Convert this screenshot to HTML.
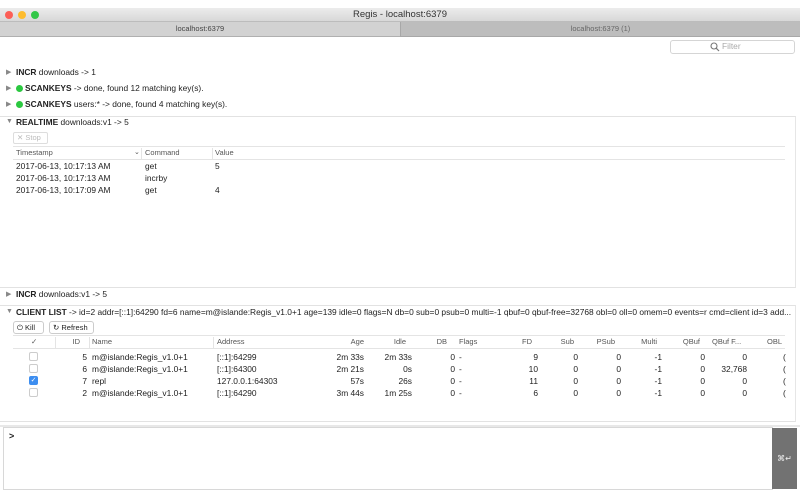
<!DOCTYPE html>
<html><head><meta charset="utf-8"><style>
*{margin:0;padding:0;box-sizing:border-box}
body{width:800px;height:500px;background:#fff;font-family:"Liberation Sans",sans-serif;font-size:8.4px;color:#222;position:relative;overflow:hidden}
.a{position:absolute;white-space:nowrap}
.b{font-weight:bold}
.tri{position:absolute;color:#888;font-size:7px}
.dot{position:absolute;width:7px;height:7px;border-radius:50%;background:#2bc840}
.hd{color:#555}
.r{text-align:right}
.cb{position:absolute;width:9px;height:9px;border:1px solid #ccc;border-radius:2px;background:#fff}
</style></head><body>
<div class="a" style="left:0;top:8px;width:800px;height:14px;background:linear-gradient(#ececec,#d8d8d8);border-bottom:1px solid #bcbcbc"></div>
<div class="a" style="left:5px;top:11px;width:8px;height:8px;border-radius:50%;background:#fc5f57"></div>
<div class="a" style="left:18px;top:11px;width:8px;height:8px;border-radius:50%;background:#fdbc2e"></div>
<div class="a" style="left:31px;top:11px;width:8px;height:8px;border-radius:50%;background:#33c748"></div>
<div class="a" style="left:0;top:9px;width:800px;text-align:center;font-size:9.5px;color:#333">Regis - localhost:6379</div>
<div class="a" style="left:0;top:22px;width:400px;height:15px;background:#d2d2d2;border-bottom:1px solid #b0b0b0;text-align:center;line-height:14px;font-size:7.5px;color:#444">localhost:6379</div>
<div class="a" style="left:400px;top:22px;width:400px;height:15px;background:#bdbdbd;border-left:1px solid #a8a8a8;border-bottom:1px solid #a8a8a8;text-align:center;line-height:14px;font-size:7.5px;color:#666">localhost:6379 (1)</div>
<div class="a" style="left:670px;top:40px;width:125px;height:14px;border:1px solid #d5d5d5;border-radius:3px;background:#fff"></div>
<svg class="a" style="left:710px;top:42px" width="10" height="10"><circle cx="4" cy="4" r="3" fill="none" stroke="#777" stroke-width="1.1"/><line x1="6.2" y1="6.2" x2="9" y2="9" stroke="#777" stroke-width="1.2"/></svg>
<div class="a" style="left:722px;top:41px;color:#aaa">Filter</div>
<div class="tri" style="left:6px;top:68px">▶</div>
<div class="a" style="left:16px;top:67px"><span class="b">INCR</span> downloads -&gt; 1</div>
<div class="tri" style="left:6px;top:84px">▶</div><div class="dot" style="left:16px;top:85px"></div>
<div class="a" style="left:25px;top:83px"><span class="b">SCANKEYS</span> -&gt; done, found 12 matching key(s).</div>
<div class="tri" style="left:6px;top:100px">▶</div><div class="dot" style="left:16px;top:101px"></div>
<div class="a" style="left:25px;top:99px"><span class="b">SCANKEYS</span> users:* -&gt; done, found 4 matching key(s).</div>
<div class="a" style="left:0;top:116px;width:796px;height:172px;border-top:1px solid #e2e2e2;border-bottom:1px solid #e2e2e2;border-right:1px solid #e6e6e6"></div>
<div class="tri" style="left:6px;top:118px">▼</div>
<div class="a" style="left:16px;top:117px"><span class="b">REALTIME</span> downloads:v1 -&gt; 5</div>
<div class="a" style="left:13px;top:132px;width:35px;height:12px;border:1px solid #ddd;border-radius:2px;color:#bbb;font-size:7.5px;padding-left:3px;line-height:10px">✕ Stop</div>
<div class="a" style="left:13px;top:146px;width:772px;height:14px;border-top:1px solid #e4e4e4;border-bottom:1px solid #e4e4e4"></div>
<div class="a hd" style="left:16px;top:148px;font-size:7.5px">Timestamp</div>
<div class="a hd" style="left:134px;top:148px;font-size:7px">⌄</div>
<div class="a" style="left:141px;top:148px;width:1px;height:11px;background:#e4e4e4"></div>
<div class="a hd" style="left:145px;top:148px;font-size:7.5px">Command</div>
<div class="a" style="left:212px;top:148px;width:1px;height:11px;background:#e4e4e4"></div>
<div class="a hd" style="left:215px;top:148px;font-size:7.5px">Value</div>
<div class="a" style="left:16px;top:161px">2017-06-13, 10:17:13 AM</div><div class="a" style="left:145px;top:161px">get</div><div class="a" style="left:215px;top:161px">5</div>
<div class="a" style="left:16px;top:173px">2017-06-13, 10:17:13 AM</div><div class="a" style="left:145px;top:173px">incrby</div>
<div class="a" style="left:16px;top:185px">2017-06-13, 10:17:09 AM</div><div class="a" style="left:145px;top:185px">get</div><div class="a" style="left:215px;top:185px">4</div>
<div class="tri" style="left:6px;top:290px">▶</div>
<div class="a" style="left:16px;top:289px"><span class="b">INCR</span> downloads:v1 -&gt; 5</div>
<div class="a" style="left:0;top:305px;width:796px;height:117px;border-top:1px solid #e2e2e2;border-bottom:1px solid #e2e2e2;border-right:1px solid #e6e6e6"></div>
<div class="tri" style="left:6px;top:308px">▼</div>
<div class="a" style="left:16px;top:307px;width:776px;overflow:hidden"><span class="b">CLIENT LIST</span> -&gt; id=2 addr=[::1]:64290 fd=6 name=m@islande:Regis_v1.0+1 age=139 idle=0 flags=N db=0 sub=0 psub=0 multi=-1 qbuf=0 qbuf-free=32768 obl=0 oll=0 omem=0 events=r cmd=client id=3 add...</div>
<div class="a" style="left:13px;top:321px;width:31px;height:13px;border:1px solid #ccc;border-radius:3px;font-size:7.5px;line-height:11px;padding-left:3px">⏻ Kill</div>
<div class="a" style="left:49px;top:321px;width:45px;height:13px;border:1px solid #ccc;border-radius:3px;font-size:7.5px;line-height:11px;padding-left:3px">↻ Refresh</div>
<div class="a" style="left:13px;top:335px;width:772px;height:14px;border-top:1px solid #e4e4e4;border-bottom:1px solid #e4e4e4"></div>
<div class="a hd" style="left:31px;top:337px;font-size:7.5px">✓</div>
<div class="a" style="left:55px;top:337px;width:1px;height:11px;background:#e4e4e4"></div>
<div class="a hd r" style="left:60px;top:337px;width:20px;font-size:7.5px">ID</div>
<div class="a" style="left:89px;top:337px;width:1px;height:11px;background:#e4e4e4"></div>
<div class="a hd" style="left:92px;top:337px;font-size:7.5px">Name</div>
<div class="a" style="left:213px;top:337px;width:1px;height:11px;background:#e4e4e4"></div>
<div class="a hd" style="left:217px;top:337px;font-size:7.5px">Address</div>
<div class="a hd r" style="left:330px;top:337px;width:34px;font-size:7.5px">Age</div>
<div class="a hd r" style="left:380px;top:337px;width:26px;font-size:7.5px">Idle</div>
<div class="a hd r" style="left:425px;top:337px;width:22px;font-size:7.5px">DB</div>
<div class="a hd" style="left:459px;top:337px;font-size:7.5px">Flags</div>
<div class="a hd r" style="left:510px;top:337px;width:22px;font-size:7.5px">FD</div>
<div class="a hd r" style="left:550px;top:337px;width:24px;font-size:7.5px">Sub</div>
<div class="a hd r" style="left:590px;top:337px;width:25px;font-size:7.5px">PSub</div>
<div class="a hd r" style="left:630px;top:337px;width:27px;font-size:7.5px">Multi</div>
<div class="a hd r" style="left:670px;top:337px;width:30px;font-size:7.5px">QBuf</div>
<div class="a hd" style="left:712px;top:337px;font-size:7.5px">QBuf F...</div>
<div class="a hd r" style="left:750px;top:337px;width:32px;font-size:7.5px">OBL</div>
<div class="cb" style="left:29px;top:352px"></div>
<div class="cb" style="left:29px;top:364px"></div>
<div class="cb" style="left:29px;top:376px;background:#3d8ef0;border-color:#3d8ef0;color:#fff;font-size:7px;line-height:7px;text-align:center">✓</div>
<div class="cb" style="left:29px;top:388px"></div>
<div class="a r" style="left:60px;top:351px;width:27px;line-height:12px">5<br>6<br>7<br>2</div>
<div class="a" style="left:92px;top:351px;line-height:12px">m@islande:Regis_v1.0+1<br>m@islande:Regis_v1.0+1<br>repl<br>m@islande:Regis_v1.0+1</div>
<div class="a" style="left:217px;top:351px;line-height:12px">[::1]:64299<br>[::1]:64300<br>127.0.0.1:64303<br>[::1]:64290</div>
<div class="a r" style="left:320px;top:351px;width:44px;line-height:12px">2m 33s<br>2m 21s<br>57s<br>3m 44s</div>
<div class="a r" style="left:370px;top:351px;width:42px;line-height:12px">2m 33s<br>0s<br>26s<br>1m 25s</div>
<div class="a r" style="left:430px;top:351px;width:25px;line-height:12px">0<br>0<br>0<br>0</div>
<div class="a" style="left:459px;top:351px;line-height:12px">-<br>-<br>-<br>-</div>
<div class="a r" style="left:510px;top:351px;width:28px;line-height:12px">9<br>10<br>11<br>6</div>
<div class="a r" style="left:550px;top:351px;width:28px;line-height:12px">0<br>0<br>0<br>0</div>
<div class="a r" style="left:590px;top:351px;width:31px;line-height:12px">0<br>0<br>0<br>0</div>
<div class="a r" style="left:630px;top:351px;width:32px;line-height:12px">-1<br>-1<br>-1<br>-1</div>
<div class="a r" style="left:670px;top:351px;width:35px;line-height:12px">0<br>0<br>0<br>0</div>
<div class="a r" style="left:710px;top:351px;width:37px;line-height:12px">0<br>32,768<br>0<br>0</div>
<div class="a" style="left:783px;top:351px;line-height:12px">(<br>(<br>(<br>(</div>
<div class="a" style="left:0;top:425px;width:800px;height:2px;background:#e8e8e8"></div>
<div class="a" style="left:3px;top:427px;width:770px;height:63px;border:1px solid #d8d8d8;background:#fff"></div>
<div class="a b" style="left:9px;top:431px;font-size:9px">&gt;</div>
<div class="a" style="left:772px;top:428px;width:25px;height:61px;background:#727272;color:#eee;font-size:8px;text-align:center;line-height:61px">⌘↵</div>
</body></html>
